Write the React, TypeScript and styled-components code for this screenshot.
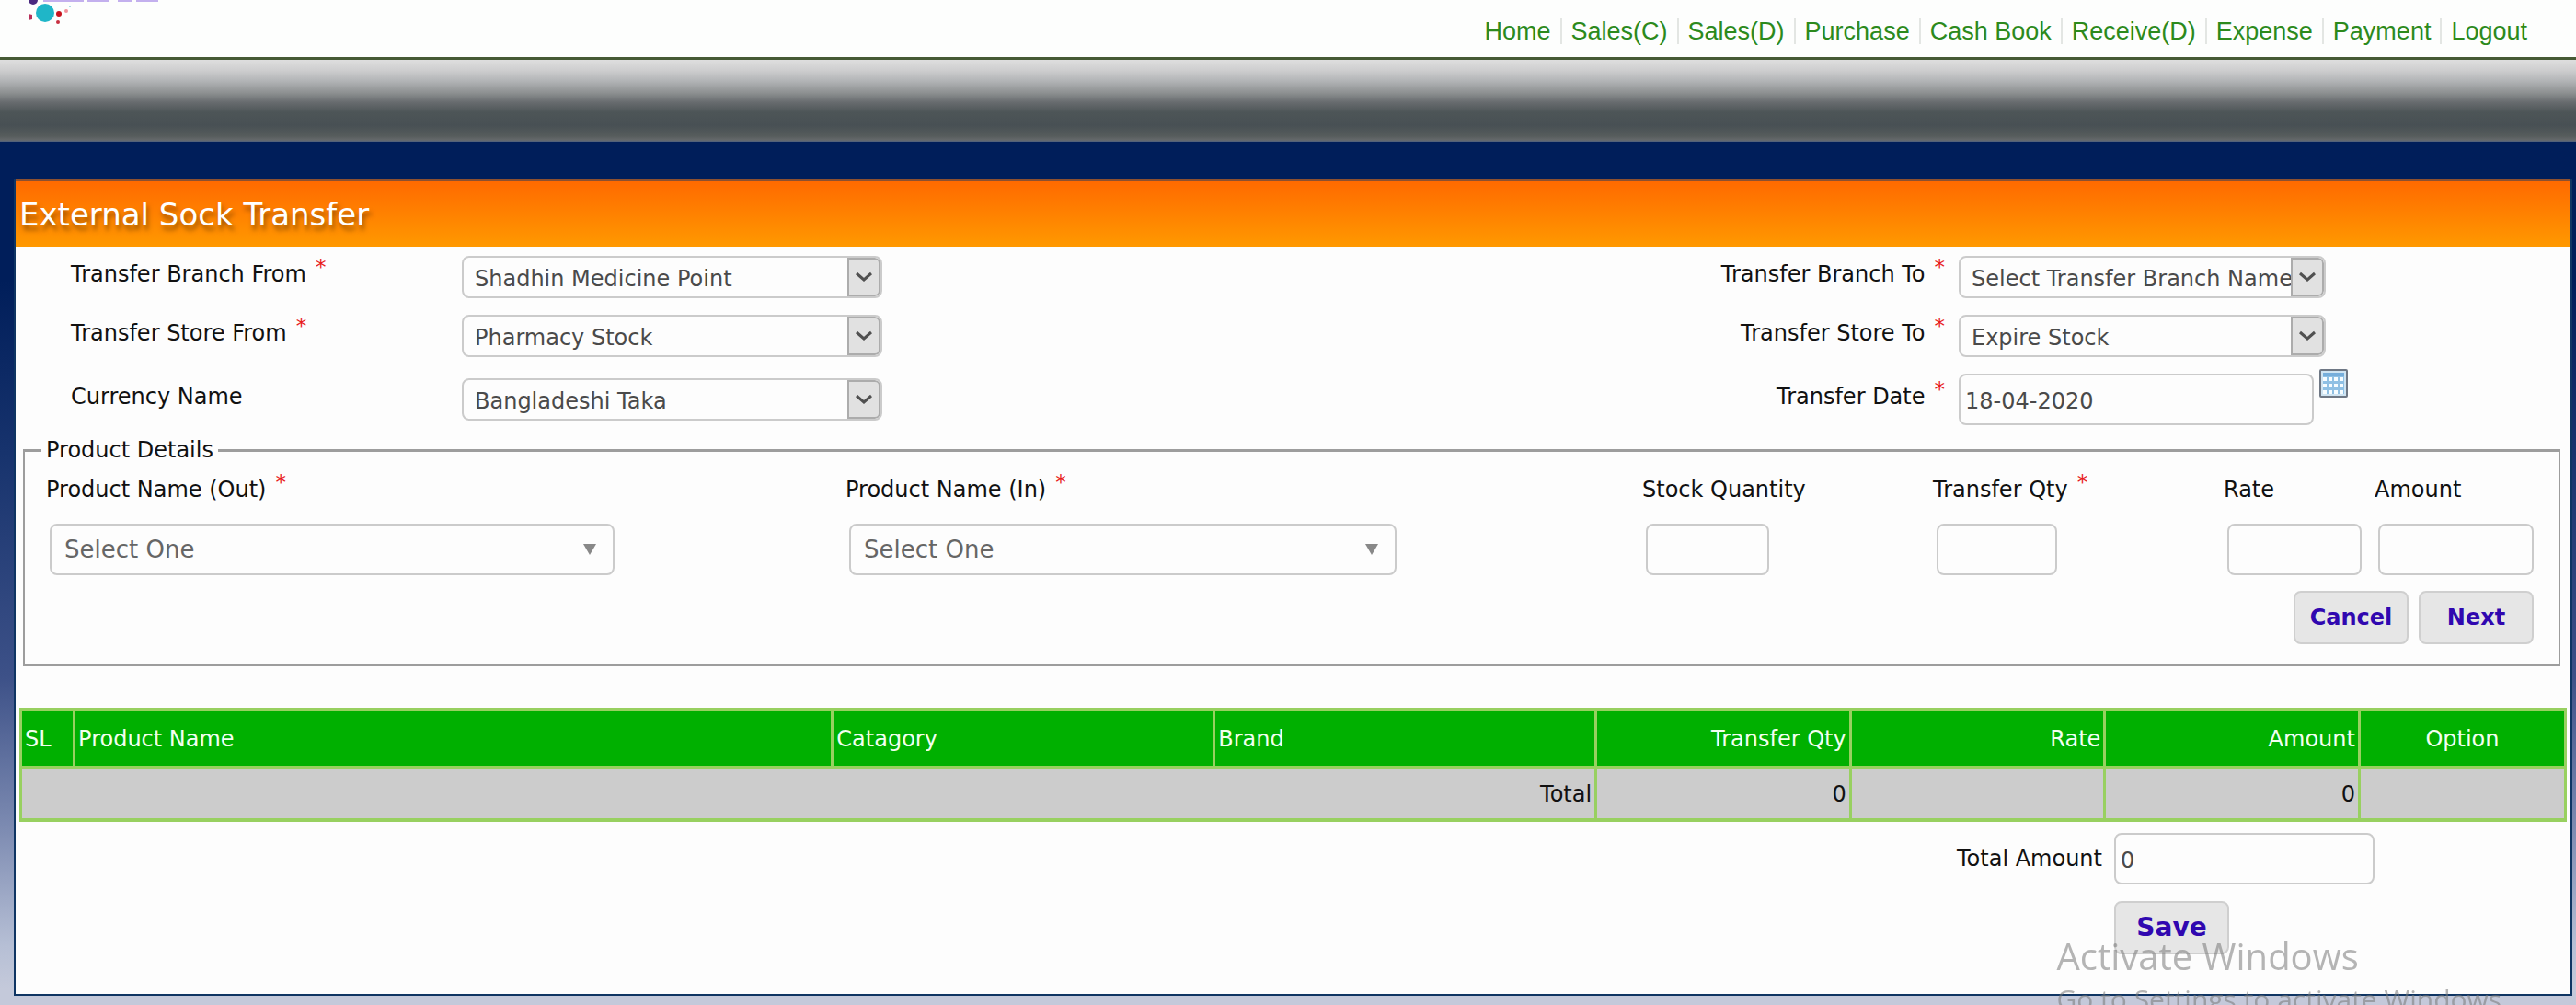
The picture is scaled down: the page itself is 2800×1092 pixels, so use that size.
import React from "react";
import styled, { createGlobalStyle } from "styled-components";

const GlobalStyle = createGlobalStyle`
  *, *::before, *::after { box-sizing: border-box; }
  html, body { margin: 0; padding: 0; }
  body {
    background: #c4c9da;
    color: #111;
    font: 24px/28px "DejaVu Sans", Verdana, sans-serif;
  }
  button, input, select { font: inherit; }
`;

const Page = styled.div`
  display: flex;
  flex-direction: column;
  min-height: 100vh;
`;

const Header = styled.header`
  display: flex;
  justify-content: space-between;
  height: 65px;
  padding: 0 53px 0 30px;
  background: #fdfefd;
  border-bottom: 3px solid #465a35;
`;

const Logo = styled.svg`
  display: block;
  width: 146px;
  height: 28px;
`;

const Nav = styled.nav`
  display: flex;
  align-items: center;
  padding-top: 6px;
  font: 27px/28px "Liberation Sans", Arial, sans-serif;
`;

const NavLink = styled.a`
  padding: 0 10px;
  color: #2c8a1c;
  text-decoration: none;
  border-right: 2px solid #e3e6e3;

  &:last-child {
    padding-right: 0;
    border-right: 0;
  }
`;

const Ribbon = styled.div`
  height: 89px;
  background: linear-gradient(
    #dedede 0%, #cfcfd0 12%, #b4b6b8 25%, #8e9192 40%, #676b6e 52%,
    #4d5557 64%, #485054 80%, #565c5c 93%, #65696b 98%, #4c5f80 100%
  );
`;

const Main = styled.main`
  flex: 1;
  padding: 41px 4px 11px 15px;
  background: linear-gradient(
    #001e5a 0%, #001e5a 16%, #17336d 36%, #3d5188 62%, #7f8db3 80%,
    #b6bfd5 93%, #c4c9da 98%
  );
`;

const Panel = styled.section`
  padding-bottom: 43px;
  background: #fdfdfd;
  border: solid #0f3563;
  border-width: 0 2px 2px;
`;

const Title = styled.h1`
  margin: 0;
  padding: 18px 4px 17px;
  border-top: 2px solid #8c5030;
  background: linear-gradient(#ff6a00, #ff9900);
  color: #fff;
  font-size: 34px;
  font-weight: 400;
  line-height: 36px;
  text-shadow: 2px 5px 5px rgba(90, 50, 0, 0.6);
`;

const TransferGrid = styled.div`
  display: grid;
  grid-template-columns: 425fr 457fr 1170fr 665fr;
  row-gap: 18px;
  align-items: center;
  padding: 10px 0 13px 60px;
`;

const Label = styled.label<{ $end?: boolean }>`
  padding: 0 ${(p) => (p.$end ? "15px" : "0")} 6px 0;
  text-align: ${(p) => (p.$end ? "right" : "left")};
  white-space: nowrap;
`;

const Star = styled.span`
  margin-left: 10px;
  color: #e81c1c;
  font-size: 23px;
  line-height: 0;
  vertical-align: 8px;
`;

const frame = `
  border: 2px solid #cbcbcb;
  border-radius: 8px;
  background: #fdfdfd;
`;

const SelectBox = styled.div<{ $width: string }>`
  display: grid;
  grid-template-columns: minmax(0, 1fr) 36px;
  width: ${(p) => p.$width};
  height: 46px;
  overflow: hidden;
  ${frame}
`;

const NativeSelect = styled.select`
  grid-area: 1 / 1 / 2 / 3;
  width: 100%;
  padding: 3px 34px 0 12px;
  border: 0;
  background: transparent;
  color: #4a4a4a;
  appearance: none;
`;

const ArrowBox = styled.span`
  grid-area: 1 / 2 / 2 / 3;
  display: grid;
  place-items: center;
  background: #e1e1e1;
  border: 2px solid #acacac;
  border-radius: 0 6px 6px 0;
  pointer-events: none;
`;

const DateCell = styled.div`
  display: flex;
  align-items: flex-start;
  gap: 6px;
`;

const TextInput = styled.input<{ $width: string }>`
  width: ${(p) => p.$width};
  height: 56px;
  padding: 3px 5px 0;
  color: #4a4a4a;
  ${frame}
`;

const CalendarButton = styled.button`
  display: block;
  margin-top: -5px;
  padding: 0;
  border: 0;
  background: none;
  line-height: 0;
`;

const Details = styled.fieldset`
  min-width: 0;
  margin: 0 11px 0 8px;
  padding: 15px 27px 21px 18px;
  border: solid #9d9d9d;
  border-width: 3px 2px;
`;

const Legend = styled.legend`
  padding: 0 5px;
`;

const ProductGrid = styled.div`
  display: grid;
  grid-template-columns: 869fr 866fr 316fr 316fr 164fr 173fr;
  padding-left: 5px;
`;

const Field = styled.div`
  display: flex;
  flex-direction: column;
  gap: 17px;
  padding-left: 4px;

  & > label {
    margin-left: -4px;
  }
`;

const ComboBox = styled.div<{ $width: string }>`
  display: grid;
  grid-template-columns: minmax(0, 1fr) 32px;
  align-items: center;
  width: ${(p) => p.$width};
  height: 56px;
  ${frame}
`;

const ComboSelect = styled.select`
  grid-area: 1 / 1 / 2 / 3;
  height: 52px;
  padding: 0 34px 0 14px;
  border: 0;
  background: transparent;
  color: #666;
  font-size: 26px;
  appearance: none;
`;

const Triangle = styled.span`
  grid-area: 1 / 2 / 2 / 3;
  width: 14px;
  border: solid transparent;
  border-width: 12px 7px 0;
  border-top-color: #888;
  pointer-events: none;
`;

const Actions = styled.div`
  display: flex;
  justify-content: flex-end;
  gap: 11px;
  padding-top: 17px;
`;

const Button = styled.button<{ $large?: boolean }>`
  width: 125px;
  height: 58px;
  padding: 0;
  border: 2px solid #cfcfcf;
  border-radius: 8px;
  background: #e6e6e6;
  color: #3008b0;
  font-size: ${(p) => (p.$large ? "28px" : "24px")};
  font-weight: 700;
`;

const TableWrap = styled.div`
  padding: 45px 4px 12px;
`;

const Table = styled.table`
  width: 100%;
  table-layout: fixed;
  border-collapse: collapse;
`;

const Cell = styled.td<{ $align?: "left" | "right" | "center" }>`
  height: 57px;
  padding: 0 3px;
  border: solid #98d060;
  border-width: 4px 3px;
  background: #ccc;
  text-align: ${(p) => p.$align ?? "left"};
`;

const HeadCell = styled(Cell)<{ $share: string }>`
  width: ${(p) => p.$share};
  height: 63px;
  background: #00b000;
  color: #f2fff0;
  font-weight: 400;
`;

const Summary = styled.div`
  display: grid;
  grid-template-columns: 2281fr 496fr;
  row-gap: 18px;
  align-items: center;
`;

const SummaryLabel = styled.label`
  padding-right: 13px;
  text-align: right;
`;

const SaveCell = styled.div`
  grid-column: 2;
`;

const Watermark = styled.div`
  position: fixed;
  right: 73px;
  bottom: -12px;
  color: rgba(120, 120, 120, 0.55);
  font: 30px/36px "Open Sans", "Noto Sans", sans-serif;
  white-space: nowrap;
  pointer-events: none;
`;

const WatermarkTitle = styled.div`
  padding-bottom: 7px;
  font-size: 40px;
  line-height: 44px;
`;

const links = [
  "Home", "Sales(C)", "Sales(D)", "Purchase", "Cash Book",
  "Receive(D)", "Expense", "Payment", "Logout",
];

type Column = { name: string; share: string; align?: "left" | "right" | "center" };

const columns: Column[] = [
  { name: "SL", share: "2.1%" },
  { name: "Product Name", share: "29.8%" },
  { name: "Catagory", share: "15%" },
  { name: "Brand", share: "15%" },
  { name: "Transfer Qty", share: "10%", align: "right" },
  { name: "Rate", share: "10%", align: "right" },
  { name: "Amount", share: "10%", align: "right" },
  { name: "Option", share: "8.1%", align: "center" },
];

function Dropdown({ id, value, width }: { id: string; value: string; width: string }) {
  return (
    <SelectBox $width={width}>
      <NativeSelect id={id} defaultValue={value}>
        <option>{value}</option>
      </NativeSelect>
      <ArrowBox>
        <svg width="18" height="12" viewBox="0 0 18 12" fill="none" stroke="#505050" strokeWidth="3">
          <path d="M1 2l8 7 8-7" />
        </svg>
      </ArrowBox>
    </SelectBox>
  );
}

function Combo({ id, width }: { id: string; width: string }) {
  return (
    <ComboBox $width={width}>
      <ComboSelect id={id}>
        <option>Select One</option>
      </ComboSelect>
      <Triangle />
    </ComboBox>
  );
}

function CalendarIcon() {
  const xs = [4, 10, 16, 22];
  const ys = [9, 16, 23];
  return (
    <svg width="31" height="31" viewBox="0 0 31 31">
      <rect x="1" y="1" width="29" height="29" rx="1" fill="#cfe4f2" stroke="#6f7885" strokeWidth="2" />
      <rect x="4" y="4" width="23" height="23" fill="#8fc0e4" />
      <rect x="4" y="4" width="23" height="4" fill="#76aedb" />
      {ys.map((y) => xs.map((x) => (
        <rect key={`${x}-${y}`} x={x} y={y} width="4" height="4" fill="#f6fcff" />
      )))}
    </svg>
  );
}

export default function App() {
  return (
    <Page>
      <GlobalStyle />
      <Header>
        <Logo viewBox="30 0 146 28" aria-hidden="true">
          <circle cx="36" cy="0" r="5" fill="#4a2a80" />
          <circle cx="49" cy="14" r="10" fill="#1fb6c8" />
          <path d="M31 15l4 1v5l-4 1z" fill="#b8305a" />
          <circle cx="64" cy="15" r="3" fill="#c8141e" />
          <circle cx="72" cy="12" r="2" fill="#f0909a" />
          <circle cx="63" cy="24" r="2" fill="#c83040" />
          <circle cx="76" cy="7" r="1" fill="#8fd0d8" />
          <path d="M47 1h44M95 1h24M128 1h16M148 1h24" stroke="#c3b0ee" strokeWidth="2" />
        </Logo>
        <Nav>
          {links.map((name) => (
            <NavLink key={name} href="#">{name}</NavLink>
          ))}
        </Nav>
      </Header>
      <Ribbon />
      <Main>
        <Panel>
          <Title>External Sock Transfer</Title>
          <TransferGrid>
            <Label htmlFor="branch-from">Transfer Branch From<Star>*</Star></Label>
            <Dropdown id="branch-from" value="Shadhin Medicine Point" width="100%" />
            <Label $end htmlFor="branch-to">Transfer Branch To<Star>*</Star></Label>
            <Dropdown id="branch-to" value="Select Transfer Branch Name" width="60%" />

            <Label htmlFor="store-from">Transfer Store From<Star>*</Star></Label>
            <Dropdown id="store-from" value="Pharmacy Stock" width="100%" />
            <Label $end htmlFor="store-to">Transfer Store To<Star>*</Star></Label>
            <Dropdown id="store-to" value="Expire Stock" width="60%" />

            <Label htmlFor="currency">Currency Name</Label>
            <Dropdown id="currency" value="Bangladeshi Taka" width="100%" />
            <Label $end htmlFor="date">Transfer Date<Star>*</Star></Label>
            <DateCell>
              <TextInput id="date" $width="58%" defaultValue="18-04-2020" />
              <CalendarButton type="button" aria-label="Pick a date"><CalendarIcon /></CalendarButton>
            </DateCell>
          </TransferGrid>

          <Details>
            <Legend>Product Details</Legend>
            <ProductGrid>
              <Field>
                <Label htmlFor="product-out">Product Name (Out)<Star>*</Star></Label>
                <Combo id="product-out" width="71%" />
              </Field>
              <Field>
                <Label htmlFor="product-in">Product Name (In)<Star>*</Star></Label>
                <Combo id="product-in" width="69%" />
              </Field>
              <Field>
                <Label htmlFor="stock">Stock Quantity</Label>
                <TextInput id="stock" $width="43%" />
              </Field>
              <Field>
                <Label htmlFor="qty">Transfer Qty<Star>*</Star></Label>
                <TextInput id="qty" $width="42%" />
              </Field>
              <Field>
                <Label htmlFor="rate">Rate</Label>
                <TextInput id="rate" $width="91%" />
              </Field>
              <Field>
                <Label htmlFor="amount">Amount</Label>
                <TextInput id="amount" $width="100%" />
              </Field>
            </ProductGrid>
            <Actions>
              <Button type="button">Cancel</Button>
              <Button type="button">Next</Button>
            </Actions>
          </Details>

          <TableWrap>
            <Table>
              <thead>
                <tr>
                  {columns.map((c) => (
                    <HeadCell as="th" key={c.name} $share={c.share} $align={c.align}>{c.name}</HeadCell>
                  ))}
                </tr>
              </thead>
              <tbody>
                <tr>
                  <Cell colSpan={4} $align="right">Total</Cell>
                  <Cell $align="right">0</Cell>
                  <Cell />
                  <Cell $align="right">0</Cell>
                  <Cell />
                </tr>
              </tbody>
            </Table>
          </TableWrap>

          <Summary>
            <SummaryLabel htmlFor="total">Total Amount</SummaryLabel>
            <TextInput id="total" $width="57%" defaultValue="0" />
            <SaveCell><Button type="button" $large>Save</Button></SaveCell>
          </Summary>
        </Panel>
      </Main>
      <Watermark>
        <WatermarkTitle>Activate Windows</WatermarkTitle>
        Go to Settings to activate Windows.
      </Watermark>
    </Page>
  );
}
